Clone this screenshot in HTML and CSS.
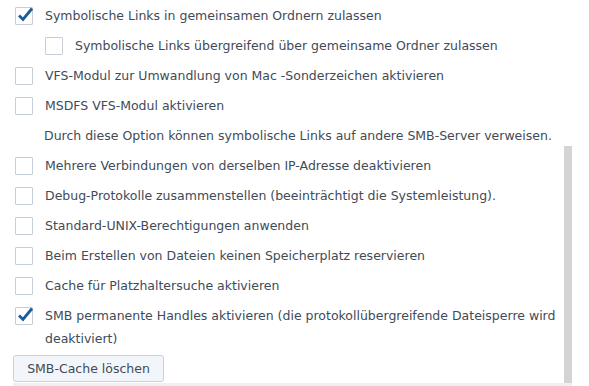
FILE: index.html
```html
<!DOCTYPE html>
<html lang="de">
<head>
    <meta charset="UTF-8">
    <title>SMB Erweiterte Einstellungen</title>
    <link rel="stylesheet" href="styles.css">
</head>
<body>
    <div class="panel">
        <div class="option">
            <span class="box checked"><svg viewBox="0 0 17 17"><path d="M3 8.5 L7 12.5 L16 1.5" /></svg></span>
            <span class="label">Symbolische Links in gemeinsamen Ordnern zulassen</span>
        </div>
        <div class="option sub">
            <span class="box"></span>
            <span class="label">Symbolische Links übergreifend über gemeinsame Ordner zulassen</span>
        </div>
        <div class="option">
            <span class="box"></span>
            <span class="label">VFS-Modul zur Umwandlung von Mac -Sonderzeichen aktivieren</span>
        </div>
        <div class="option">
            <span class="box"></span>
            <span class="label">MSDFS VFS-Modul aktivieren</span>
        </div>
        <div class="hint">Durch diese Option können symbolische Links auf andere SMB-Server verweisen.</div>
        <div class="option">
            <span class="box"></span>
            <span class="label">Mehrere Verbindungen von derselben IP-Adresse deaktivieren</span>
        </div>
        <div class="option">
            <span class="box"></span>
            <span class="label">Debug-Protokolle zusammenstellen (beeinträchtigt die Systemleistung).</span>
        </div>
        <div class="option">
            <span class="box"></span>
            <span class="label">Standard-UNIX-Berechtigungen anwenden</span>
        </div>
        <div class="option">
            <span class="box"></span>
            <span class="label">Beim Erstellen von Dateien keinen Speicherplatz reservieren</span>
        </div>
        <div class="option">
            <span class="box"></span>
            <span class="label">Cache für Platzhaltersuche aktivieren</span>
        </div>
        <div class="option">
            <span class="box checked"><svg viewBox="0 0 17 17"><path d="M3 8.5 L7 12.5 L16 1.5" /></svg></span>
            <span class="label">SMB permanente Handles aktivieren (die protokollübergreifende Dateisperre wird deaktiviert)</span>
        </div>
        <button class="action-button">SMB-Cache löschen</button>
        <div class="footer-strip"></div>
        <div class="scroll-thumb"></div>
    </div>
</body>
</html>
```

FILE: styles.css
```css
body {
    margin: 0;
    padding: 0;
    background-color: #ffffff;
    font-family: "DejaVu Sans", sans-serif;
    font-size: 12.5px;
    color: #414b57;
}
.panel {
    position: relative;
    width: 589px;
    height: 386px;
    overflow: hidden;
    padding-left: 15px;
    box-sizing: border-box;
}
.option {
    display: flex;
    align-items: flex-start;
    padding: 4px 0 3px 0;
    width: 545px;
}
.option.sub {
    padding-left: 30px;
}
.box {
    flex: none;
    width: 16px;
    height: 16px;
    margin-top: 3px;
    margin-right: 12px;
    border: 1px solid #c6ced8;
    border-radius: 1px;
    background-color: #ffffff;
}
.box svg {
    display: block;
    width: 17px;
    height: 17px;
    margin: -1px 0 0 0;
    overflow: visible;
}
.box svg path {
    fill: none;
    stroke: #1d5b9a;
    stroke-width: 2.8;
}
.label {
    line-height: 23px;
}
.hint {
    padding: 4px 0 3px 29px;
    line-height: 23px;
}
.action-button {
    display: block;
    margin: 2px 0 0 -2px;
    width: 151px;
    height: 27px;
    font-family: inherit;
    font-size: 12.5px;
    color: #414b57;
    background-color: #f2f6fa;
    border: 1px solid #c8d2de;
    border-radius: 3px;
}
.footer-strip {
    margin: 1px 0 0 -2px;
    width: 559px;
    height: 3px;
    background-color: #f0f0f0;
}
.scroll-thumb {
    position: absolute;
    left: 564px;
    top: 146px;
    width: 8px;
    height: 237px;
    background-color: #d4d4d4;
}
```
